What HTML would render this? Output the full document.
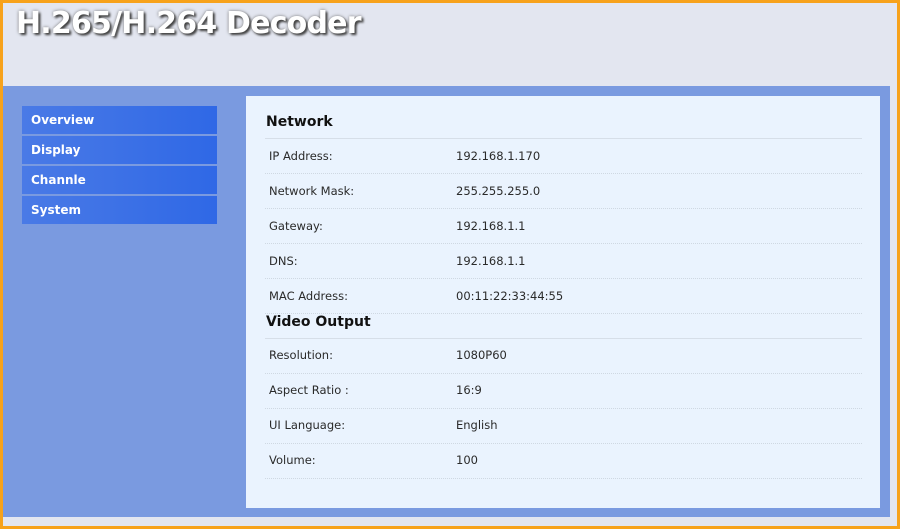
<!DOCTYPE html>
<html><head><style>
*{margin:0;padding:0;box-sizing:border-box}
body{width:900px;height:529px;background:#f7a21b;position:relative;overflow:hidden;font-family:"DejaVu Sans","Liberation Sans",sans-serif}
#in{position:absolute;left:3px;top:3px;width:894px;height:523px;background:#e3e6f0}
#title{position:absolute;left:16px;top:6px;font:bold 30px "DejaVu Sans",sans-serif;color:#fff;text-shadow:2px 2px 2px #444,0 0 3px #777;letter-spacing:-0.8px}
#blue{position:absolute;left:3px;top:86px;width:887px;height:431px;background:#7a9ae0}
.nav{position:absolute;left:22px;width:195px;height:28px;background:linear-gradient(90deg,#4a7ae6,#2f68e6);color:#fff;font:bold 12px "DejaVu Sans",sans-serif;padding:7px 0 0 9px}
#panel{position:absolute;left:246px;top:96px;width:634px;height:412px;background:#eaf3fe}
.h{position:absolute;left:266px;font:bold 14px "DejaVu Sans",sans-serif;color:#111}
.ln{position:absolute;left:265px;width:597px;border-top:1px solid #d6dee8}
.dl{position:absolute;left:265px;width:597px;border-top:1px dotted #cfd8e2}
.l,.v{position:absolute;font-size:11.5px;color:#2a2a2a}
.l{left:269px}.v{left:456px}
</style></head><body>
<div id="in"></div>
<div id="title">H.265/H.264 Decoder</div>
<div id="blue"></div>
<div class="nav" style="top:106px">Overview</div>
<div class="nav" style="top:136px">Display</div>
<div class="nav" style="top:166px">Channle</div>
<div class="nav" style="top:196px">System</div>
<div id="panel"></div>
<div class="h" style="top:114px">Network</div>
<div class="ln" style="top:138px"></div>
<div class="l" style="top:149px">IP Address:</div><div class="v" style="top:149px">192.168.1.170</div>
<div class="dl" style="top:173px"></div>
<div class="l" style="top:184px">Network Mask:</div><div class="v" style="top:184px">255.255.255.0</div>
<div class="dl" style="top:208px"></div>
<div class="l" style="top:219px">Gateway:</div><div class="v" style="top:219px">192.168.1.1</div>
<div class="dl" style="top:243px"></div>
<div class="l" style="top:254px">DNS:</div><div class="v" style="top:254px">192.168.1.1</div>
<div class="dl" style="top:278px"></div>
<div class="l" style="top:289px">MAC Address:</div><div class="v" style="top:289px">00:11:22:33:44:55</div>
<div class="dl" style="top:313px"></div>
<div class="h" style="top:314px">Video Output</div>
<div class="ln" style="top:338px"></div>
<div class="l" style="top:348px">Resolution:</div><div class="v" style="top:348px">1080P60</div>
<div class="dl" style="top:373px"></div>
<div class="l" style="top:383px">Aspect Ratio :</div><div class="v" style="top:383px">16:9</div>
<div class="dl" style="top:408px"></div>
<div class="l" style="top:418px">UI Language:</div><div class="v" style="top:418px">English</div>
<div class="dl" style="top:443px"></div>
<div class="l" style="top:453px">Volume:</div><div class="v" style="top:453px">100</div>
<div class="dl" style="top:478px"></div>
</body></html>
